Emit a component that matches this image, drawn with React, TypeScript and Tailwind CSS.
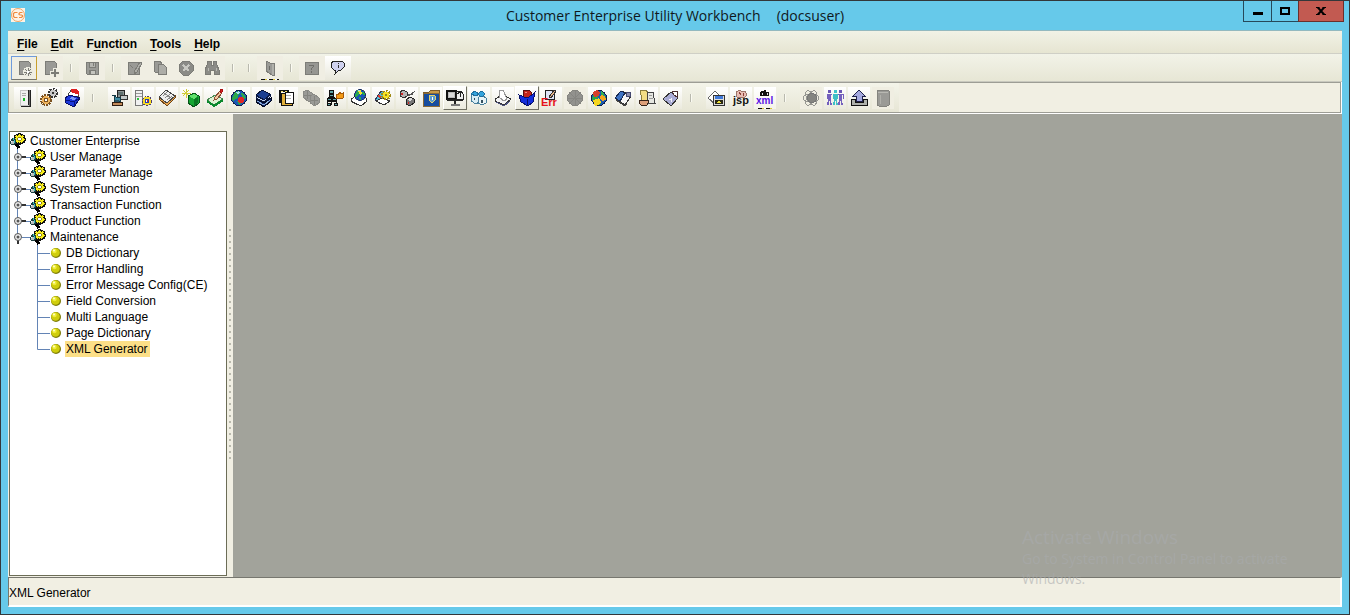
import React, { useState } from "react";

type Tool = {
  label: string;
  art?: React.ReactNode;
  look?: "flat" | "raised" | "pressed" | "off" | "smudged";
  sep?: boolean;
};

const K = "#111";

/* ---------- top toolbar drawings, 24 x 24 ---------- */
const grey = "#9a9a96";
const dark = "#7c7c77";

const pageShape = <path d="M7 5h9l2 2v11H7z" fill={grey} stroke={dark} />;

const mainTools: Tool[] = [
  {
    label: "New",
    look: "pressed",
    art: (
      <>
        {pageShape}
        <circle cx="16" cy="16" r="5" fill="#ecebe0" />
        <path d="M16 12v8M12 16h8M13 13l6 6M19 13l-6 6" stroke={dark} />
        <circle cx="16" cy="16" r="1" fill="#fff" />
      </>
    ),
  },
  {
    label: "Add",
    look: "off",
    art: (
      <>
        {pageShape}
        <path d="M17 12v9M12 17h9" stroke="#ecebe0" strokeWidth="4" />
        <path d="M17 13v8M13 17h8" stroke={dark} strokeWidth="2" />
      </>
    ),
  },
  { label: "s1", sep: true },
  {
    label: "Save",
    look: "off",
    art: (
      <>
        <path d="M6 6h12v12H7l-1-1z" fill={grey} stroke={dark} />
        <path d="M9 6h6v5H9z" fill="#b4b4af" stroke={dark} />
        <path d="M9 14h6v4H9z" fill="#c4c4be" stroke={dark} />
        <path d="M13 7v3M10 15v3" stroke={dark} />
      </>
    ),
  },
  { label: "s2", sep: true },
  {
    label: "Edit",
    look: "off",
    art: (
      <>
        <path d="M6 6h11v12H6z" fill={grey} stroke={dark} />
        <path d="M8 9l3 3M12 18l1-4 5-8 2 1-5 9z" fill="#adada8" stroke={dark} />
      </>
    ),
  },
  {
    label: "Copy",
    look: "off",
    art: (
      <>
        <path d="M6 5h6l2 3v8H7z" fill={grey} stroke={dark} />
        <path d="M10 8h5l3 3v7h-8z" fill="#adada8" stroke={dark} />
      </>
    ),
  },
  {
    label: "Cancel",
    look: "off",
    art: (
      <>
        <path d="M9 5h6l4 4v6l-4 4H9l-4-4V9z" fill="#8b8b87" stroke={dark} />
        <path d="M9 9l6 6M15 9l-6 6" stroke="#c8c8c2" strokeWidth="2" />
      </>
    ),
  },
  {
    label: "Find",
    look: "off",
    art: (
      <>
        <path d="M8 5h3v4h2V5h3l1 4 2 5v4h-5v-4h-4v4H5v-4l2-5z" fill="#8b8b87" stroke={dark} />
        <path d="M8 12v3M16 12v3" stroke="#b9b9b3" />
      </>
    ),
  },
  { label: "s3", sep: true },
  { label: "s4", sep: true },
  {
    label: "Exit",
    look: "smudged",
    art: (
      <>
        <path d="M8 5l6 3v11l-6-4z" fill={grey} stroke={dark} />
        <path d="M14 7h2v12h-2" fill="#b0b0aa" stroke={dark} />
        <path d="M11 10v4" stroke="#6b6b67" />
      </>
    ),
  },
  { label: "s5", sep: true },
  {
    label: "Help",
    look: "off",
    art: (
      <>
        <path d="M5 6h13v12H5z" fill="#969692" stroke={dark} />
        <path d="M9 10V9h4v2l-2 2v1M11 15v2" stroke="#6f6f6b" />
      </>
    ),
  },
  {
    label: "About",
    look: "raised",
    art: (
      <>
        <path
          d="M8 5h8l2 2v4l-3 3h-2l-4 4 1-4H8l-3-3V7z"
          fill="#cfd1ee"
          stroke="#222"
        />
        <path d="M12 7v1M12 9v3" stroke="#333" />
      </>
    ),
  },
];

/* ---------- lower toolbar drawings, 22 x 22 ---------- */
const globe = (x: number, y: number, size: number) => (
  <svg x={x} y={y} width={size} height={size} viewBox="0 0 16 16">
    <circle cx="8" cy="8" r="7.500" fill="#1b57b5" stroke="#0d1f4c" />
    <path d="M2 6l2-4 4-1 1 2-2 2v3l-3 1-1 3-2-3z" fill="#2aa84c" />
    <path d="M10 3l3 1 2 4-2 1-2-2z" fill="#2aa84c" />
    <path d="M6 11l3-1 1 3-2 2z" fill="#2aa84c" />
    <path d="M5 2l3-1 1 2-3 1z" fill="#a7dff0" />
  </svg>
);

const cog = (cx: number, cy: number, r: number, color: string, edge: string, hub: string) => (
  <>
    <circle cx={cx} cy={cy} r={r} stroke={edge} strokeWidth="2" strokeDasharray="2 1" />
    <circle cx={cx} cy={cy} r={r - 1} fill={color} />
    <circle cx={cx} cy={cy} r={r > 4 ? 2 : 1} fill={hub} stroke={edge} />
  </>
);

const workTools: Tool[] = [
  {
    label: "Server",
    art: (
      <>
        <path d="M13 3h4v16h-4z" fill="#6b6b6b" />
        <path d="M6 3h8v15H6z" fill="#f0f0f0" stroke="#c4c4c4" />
        <path d="M14 3v15M16 3v16H7" stroke="#222" />
        <path d="M8 6h4M8 8h4" stroke="#aaa" />
        <path d="M9 11h2v3H9z" fill="#19b929" />
      </>
    ),
  },
  {
    label: "Settings",
    art: (
      <>
        {cog(15, 6, 4, "#c9c9c9", "#333", "#fff")}
        {cog(8, 13, 5, "#f0b45c", "#7c5220", "#fff")}
      </>
    ),
  },
  {
    label: "Package",
    art: (
      <>
        <path d="M6 8l3-5 7 1 1 5-5 3z" fill="#fff" stroke="#444" />
        <path d="M9 2h5l3 3v3l-8-3z" fill="#dd2020" />
        <path d="M3 11l5-3 10 3-6 9-8-4z" fill="#1c38da" stroke="#080f65" />
        <path d="M9 10l5 1-2 2-5-1z" fill="#7e98f5" />
        <path d="M4 13l8 2 5-4M12 15v4" stroke="#071280" />
      </>
    ),
  },
  { label: "w1", sep: true },
  {
    label: "Workstation",
    art: (
      <>
        <path d="M9 3h7v8H9z" fill="#8d9494" stroke="#222" />
        <path d="M12 8h7v4h-7z" fill="#c3c8c8" stroke="#333" />
        <path d="M10 5h5v3h-5z" fill="#5f7070" />
        <path d="M4 8h3l1 2h4v4H6V9z" fill="#3f8ba2" stroke="#153a46" />
        <path d="M7 13h4v3H7z" fill="#2b5566" />
        <path d="M4 15h10v3H4z" fill="#c38b5b" stroke="#301e12" />
      </>
    ),
  },
  {
    label: "Server settings",
    art: (
      <>
        <path d="M3 3h7v15H3z" fill="#f0f0f0" stroke="#777" />
        <path d="M4 6h6M4 9h6" stroke="#999" />
        <path d="M5 11h2v2H5z" fill="#2dc33c" />
        <circle cx="15" cy="14" r="4.500" fill="#f7dc22" stroke="#4f3f6f" strokeDasharray="2 1" />
        <circle cx="15" cy="14" r="2" fill="#fff" stroke="#2740b8" />
        <path d="M15 13h1v2h-1z" fill="#d22" />
      </>
    ),
  },
  {
    label: "Ledger",
    art: (
      <>
        <path d="M3 12l8 7 8-8v-2l-8 6-8-5z" fill="#e8a650" stroke="#6e4416" />
        <path d="M3 10l7-7 9 6-8 7z" fill="#eee" stroke="#444" />
        <path d="M7 9l4-4M9 11l5-4M11 13l5-4M8 6l7 5" stroke="#888" />
      </>
    ),
  },
  {
    label: "New module",
    art: (
      <>
        <path d="M6 2v9M2 6h9M3 3l6 6M9 3L3 9" stroke="#d0cc35" />
        <path d="M8 9l6-3 5 3v7l-5 4-6-4z" fill="#16a633" stroke="#075318" />
        <path d="M9 9l5-2 4 2-4 3z" fill="#62e06c" />
        <path d="M14 12v7l4-3v-6z" fill="#0a7723" />
      </>
    ),
  },
  {
    label: "Edit notes",
    art: (
      <>
        <path d="M3 13l8-5 8 4-9 6z" fill="#dcf1d2" stroke="#4a8a55" />
        <path d="M3 14l7 5 9-6" stroke="#0a882d" strokeWidth="2" />
        <path d="M10 13l1-3 5-6 2 2-5 6z" fill="#f2c9a0" stroke="#8a4a33" />
        <path d="M16 3l2-1 1 2-2 2z" fill="#d72424" stroke="#a11" />
      </>
    ),
  },
  {
    label: "World",
    art: (
      <>
        {globe(3, 3, 16)}
        <circle cx="13" cy="13" r="3" fill="#e02828" />
      </>
    ),
  },
  {
    label: "Library",
    art: (
      <>
        <path d="M4 8l6-5 8 4-6 6z" fill="#1b3f91" stroke="#081437" />
        <path d="M4 9l8 4 6-5v2l-6 5-8-4z" fill="#c9d8ee" stroke="#0b1a45" />
        <path d="M4 12l8 4 7-5v3l-7 6-8-5z" fill="#10286b" stroke="#050b22" />
        <path d="M5 14l7 4 6-5" stroke="#8fb0dc" />
      </>
    ),
  },
  {
    label: "Documents",
    art: (
      <>
        <path d="M3 3h10v2H5v11H3z" fill="#111" />
        <path d="M5 6h11v12H5z" fill="#e2b03b" stroke="#111" />
        <path d="M9 5h8v11H9z" fill="#fff" stroke="#111" />
        <path d="M10 8h5M10 11h5" stroke="#aaa" />
        <path d="M5 4h2M9 4h2" stroke="#f5e26a" />
      </>
    ),
  },
  {
    label: "Components",
    look: "off",
    art: (
      <>
        <path d="M3 5l4-2 5 3v6l-3 3-6-5z" fill={grey} stroke="#8a8a85" />
        <path d="M10 9l4-2 5 4v5l-4 3-5-3z" fill={grey} stroke="#8a8a85" />
        <path d="M7 4v8M4 8h7M14 9v9M11 13h7" stroke="#84847f" />
      </>
    ),
  },
  {
    label: "Hierarchy",
    art: (
      <>
        <path d="M7 4v14M4 10h7M3 14h9M3 14v4M12 14v4" stroke="#111" />
        <path d="M5 3h4v3H5zM5 7h4v2H5zM3 11h4v2H3zM8 11h4v2H8zM3 16h3v2H3zM10 16h3v2h-3z" fill="#5fa3a6" stroke="#111" />
        <path d="M12 7l2 1 2-3 1 2 2-1v5l-3 1-4-1z" fill="#f39a14" stroke="#a5590a" />
      </>
    ),
  },
  {
    label: "Publish",
    art: (
      <>
        <path d="M3 12l5-3 10 2 1 3-6 5-10-5z" fill="#fff" stroke="#333" />
        <path d="M4 15l9 4 6-5" stroke="#333" />
        {globe(6, 2, 12)}
        <path d="M10 4l3-1 1 3-2 2z" fill="#eee236" />
      </>
    ),
  },
  {
    label: "Configure page",
    art: (
      <>
        <path d="M3 13l6-9 5 2-5 11z" fill="#55bfd8" stroke="#335" />
        <path d="M4 14l6-3 8 3-6 4z" fill="#fff" stroke="#333" />
        {cog(14, 8, 4, "#f7e321", "#a08b16", "#fff")}
        <path d="M6 9l3 1" stroke="#dd3c31" strokeWidth="2" />
      </>
    ),
  },
  {
    label: "Network",
    art: (
      <>
        <path d="M9 7l4 2 6-5M12 7h5" stroke="#555" />
        <path d="M4 5l3-2 4 2v4l-3 2-4-2z" fill="#b5b5b5" stroke="#333" />
        <path d="M10 13l4-3 4 2v4l-4 3-4-2z" fill="#777" stroke="#222" />
        <path d="M11 13l3-2 3 1-3 2z" fill="#ddd" />
        <path d="M5 7h2M12 16h1" stroke="#cf2424" strokeWidth="2" />
      </>
    ),
  },
  {
    label: "Scheduled folder",
    art: (
      <>
        <path d="M3 5h6l2-2h8v3H3z" fill="#c99a4a" stroke="#7a5a2b" />
        <path d="M3 6h16v13H3z" fill="#174d9f" stroke="#8a6a37" />
        <path d="M9 9l3-1 3 1v4l-3 3-3-3z" fill="#5a9bd0" stroke="#e6d26b" />
        <path d="M12 10v2h1" stroke="#fff" />
      </>
    ),
  },
  {
    label: "Terminal",
    look: "raised",
    art: (
      <>
        <path d="M3 4h9v8H3z" fill="#bbb" stroke="#111" strokeWidth="2" />
        <path d="M5 6h5v4H5z" fill="#d9d9d9" />
        <path d="M12 4h5l2 3v5h-7z" fill="#eee" stroke="#222" />
        <path d="M13 7l3-2v5" stroke="#222" />
        <path d="M3 13h16M11 13v5" stroke="#222" strokeWidth="2" />
        <path d="M7 18h9" stroke="#777" strokeWidth="2" />
      </>
    ),
  },
  {
    label: "User groups",
    art: (
      <>
        <path d="M3 8l4-3 4 3v7l-3 2-5-3z" fill="#d9edf5" stroke="#477f9c" />
        <path d="M10 11l4-3 4 3v5l-4 2-4-2z" fill="#e9f4f7" stroke="#477f9c" />
        <path d="M3 7l4-3 4 3-3 2zM9 7l5-3 3 3-3 3z" fill="#35a4dd" stroke="#1f6f9e" />
        <path d="M13 13h2v3h-2zM6 11h1v2H6z" fill="#334f60" />
      </>
    ),
  },
  {
    label: "Scan",
    art: (
      <>
        <path d="M3 12l7-4 9 4-7 6-9-4z" fill="#f4f4f4" stroke="#333" />
        <path d="M7 4l4-1 4 9-3 2-4-3z" fill="#fff" stroke="#999" />
        <path d="M4 15l8 4 6-5" stroke="#4b5180" />
      </>
    ),
  },
  {
    label: "Deploy",
    look: "raised",
    art: (
      <>
        <path d="M8 3h5l2 2v4l-2 1H8L7 8V5z" fill="#c3241c" stroke="#5b1010" />
        <path d="M9 5h2v1H9z" fill="#f08a80" />
        <path d="M3 8l8 3 5-3 3-3-2 10-5 4-7-4z" fill="#142edc" stroke="#06106c" />
        <path d="M11 12v6" stroke="#06106c" />
      </>
    ),
  },
  {
    label: "Error editor",
    art: (
      <>
        <path d="M5 3h9v9H5z" fill="#dde3f5" stroke="#222" />
        <path d="M9 10l5-7 2 1-5 7z" fill="#e7b486" stroke="#333" />
        <text x="1" y="19" fill="#e5131b" fontFamily="Liberation Sans, sans-serif" fontWeight="700" fontSize="11">
          Err
        </text>
      </>
    ),
  },
  {
    label: "Stop",
    look: "off",
    art: (
      <>
        <circle cx="11" cy="11" r="7.500" fill="#92928e" stroke="#858580" />
        <path d="M6 6l10 10M16 6L6 16M4 11h14M11 4v14" stroke="#868682" />
      </>
    ),
  },
  {
    label: "Regions",
    art: (
      <>
        {globe(3, 3, 16)}
        <path d="M5 5l4-2 3 2-1 4-5 1z" fill="#d7412d" />
        <path d="M13 8l4 1 1 4-4 1-2-3z" fill="#f3a51e" />
        <path d="M5 13l6-2 2 4-2 3-4 1z" fill="#f5d522" />
        <path d="M13 4l3 2-2 2z" fill="#36b358" />
      </>
    ),
  },
  {
    label: "Notebook",
    art: (
      <>
        <path d="M3 11l7-7 9 5-6 9z" fill="#f6f6f6" stroke="#333" />
        <path d="M3 11l6-7 4 2-5 8z" fill="#3f74c4" stroke="#162952" />
        <path d="M14 5h4v4h-4z" fill="#8b8fae" stroke="#444870" />
        <path d="M4 13l9 6 2-3" stroke="#444" />
      </>
    ),
  },
  {
    label: "Hand over",
    art: (
      <>
        <path d="M4 3h6l2 3v7H6z" fill="#f2dd84" stroke="#8a7d3c" />
        <path d="M11 5h6l2 11h-7z" fill="#e6e7e1" stroke="#444" />
        <path d="M13 8h3M13 11h4" stroke="#999" />
        <path d="M3 13h6l4 1-2 4H5l-2-2z" fill="#dd9f78" stroke="#372318" />
      </>
    ),
  },
  {
    label: "Tag",
    art: (
      <>
        <path d="M3 12l8-7 7 6-7 8z" fill="#a9abd4" stroke="#333" />
        <path d="M12 4h5v6l-3-2z" fill="#fff" stroke="#4b2d2d" />
        <path d="M9 12h3M11 11v4" stroke="#f2f2fa" />
      </>
    ),
  },
  { label: "w2", sep: true },
  {
    label: "Preview",
    art: (
      <>
        <path d="M2 11l7-7 6 6-6 7z" fill="#fff" stroke="#666" />
        <path d="M7 8h11v10H7z" fill="#ddd" stroke="#333" />
        <path d="M9 9h8v3H9z" fill="#3f78d8" />
        <path d="M9 13h8v4H9z" fill="#292714" />
        <path d="M11 15h4M12 14h2" stroke="#efe33a" />
      </>
    ),
  },
  {
    label: "JSP",
    art: (
      <>
        <path d="M6 5l4-2 2 2 3-1 2 4-2 2H7z" fill="#e9bdb3" stroke="#9c7468" />
        <path d="M9 5l2 3M13 6v3" stroke="#8a3f35" />
        <text x="3" y="17" fill={K} fontFamily="Liberation Sans, sans-serif" fontWeight="700" fontSize="11">
          jsp
        </text>
      </>
    ),
  },
  {
    label: "XML",
    look: "smudged",
    art: (
      <>
        <path d="M6 5l2-1h2V3h2v2h3v4H6z" fill="#111" />
        <path d="M8 6v2M13 6v2" stroke="#ddd" />
        <text x="2" y="17" fill="#5a12e6" fontFamily="Liberation Sans, sans-serif" fontWeight="700" fontSize="10">
          xml
        </text>
      </>
    ),
  },
  { label: "w3", sep: true },
  {
    label: "Process",
    look: "off",
    art: (
      <>
        <ellipse cx="11" cy="11" rx="8" ry="4" stroke="#979792" />
        <ellipse cx="11" cy="11" rx="8" ry="4" stroke="#979792" transform="rotate(60 11 11)" />
        <ellipse cx="11" cy="11" rx="8" ry="4" stroke="#979792" transform="rotate(120 11 11)" />
        <circle cx="12" cy="11" r="4.500" fill="#858581" stroke="#777" />
      </>
    ),
  },
  {
    label: "Users",
    art: (
      <>
        <path d="M4 3h3v3H4zM15 3h3v3h-3z" fill="#6a56b5" />
        <path d="M10 3h3v3h-3z" fill="#3fc6c9" />
        <path d="M3 7h5M14 7h5M3 7v5M19 7v5" stroke="#7460bd" />
        <path d="M4 7h3v6l1 5H6v-4H5v4H3l1-5zM15 7h3v6l1 5h-2v-4h-1v4h-2l1-5z" fill="#7460bd" />
        <path d="M9 7h5v5h-1v1l1 5h-2v-4h-1v4H9l1-5v-1H9z" fill="#3fbfc6" />
      </>
    ),
  },
  {
    label: "Upload",
    art: (
      <>
        <path d="M3 12h4v3h8v-3h4v6H3z" fill="#aeb0ac" stroke="#111" />
        <path d="M11 3l6 6h-3v5H8V9H5z" fill="#a5a9df" stroke="#20224c" />
      </>
    ),
  },
  {
    label: "Recycle bin",
    look: "off",
    art: (
      <>
        <path d="M5 4l2-1h8l2 1v14l-2 1H7l-2-1z" fill="#9a9a96" stroke="#83837e" />
        <path d="M6 5h10" stroke="#b8b8b2" />
        <path d="M8 8v9" stroke="#b0b0aa" />
      </>
    ),
  },
];

function Smudge() {
  return (
    <span className="absolute inset-x-1 bottom-0 h-px bg-[repeating-linear-gradient(90deg,#111_0_4px,#d9c53a_4px_6px,#fff_6px_8px)]" />
  );
}

const bigLooks = {
  flat: "bg-[#f1efe3]",
  off: "bg-[#f0eee3]",
  raised: "bg-gradient-to-b from-white to-[#e9e8dc]",
  pressed:
    "border border-t-[#6f9bdc] border-l-[#6f9bdc] border-b-[#77776f] border-r-[#c9a02e] bg-[#f0eee3]",
  smudged: "bg-[#f0eee3]",
};

const smallLooks = {
  flat: "mx-px my-1 size-[22px] bg-gradient-to-b from-white to-[#ebeade]",
  off: "mx-px my-1 size-[22px] bg-[#f0eee2]",
  raised:
    "my-[3px] size-6 border border-t-white border-l-white border-b-[#6f6f62] border-r-[#6f6f62] bg-gradient-to-b from-white to-[#ebeade]",
  pressed: "mx-px my-1 size-[22px] bg-white",
  smudged: "mx-px my-1 size-[22px] bg-gradient-to-b from-white to-[#f4f3ea]",
};

function Bar() {
  return <span className="h-2 w-0.5 border-l border-[#b9b9ae] bg-[#fafaf2]" />;
}

function MainToolbar() {
  return (
    <div role="toolbar" aria-label="Main" className="flex h-7 items-center border-b border-[#c9c9bf] bg-gradient-to-b from-[#f2f3e8] to-[#e7e6d5] pl-[3px]">
      {mainTools.map((t) =>
        t.sep ? (
          <span key={t.label} className="flex w-4 justify-center">
            <Bar />
          </span>
        ) : (
          <button
            key={t.label}
            type="button"
            aria-label={t.label}
            className={`relative flex h-6 w-[26px] items-center justify-center ${bigLooks[t.look ?? "flat"]}`}
          >
            <svg viewBox="0 0 24 24" className="size-6 shrink-0" fill="none" shapeRendering="crispEdges">
              {t.art}
            </svg>
            {t.look === "smudged" && <Smudge />}
          </button>
        ),
      )}
    </div>
  );
}

function WorkToolbar() {
  return (
    <div className="border-b border-white bg-white pr-px">
      <div className="flex h-[31px] border border-[#9d9d95] bg-[#f1efe3]">
        <div role="toolbar" aria-label="Workbench" className="flex bg-gradient-to-b from-[#f4f4ea] to-[#e7e6d5] px-1">
          {workTools.map((t) =>
            t.sep ? (
              <span key={t.label} className="flex w-[22px] items-center pl-[7px]">
                <Bar />
              </span>
            ) : (
              <button
                key={t.label}
                type="button"
                aria-label={t.label}
                className={`relative flex shrink-0 items-center justify-center ${smallLooks[t.look ?? "flat"]}`}
              >
                <svg viewBox="0 0 22 22" className="size-[22px] shrink-0" fill="none" shapeRendering="crispEdges">
                  {t.art}
                </svg>
                {t.look === "smudged" && <Smudge />}
              </button>
            ),
          )}
        </div>
      </div>
    </div>
  );
}

function GearIcon() {
  return (
    <svg viewBox="0 0 16 16" className="size-4 shrink-0 overflow-visible" fill="none" shapeRendering="crispEdges">
      <path d="M5 10l4 5" stroke="#000" strokeWidth="3" />
      <path
        d="M8 0h3v1h2v1h2v3h1v3h-1v2h-2v1h-2v1H8v-1H6v-1H4V8H3V5h1V2h2V1h2z"
        fill="#111"
      />
      <path
        d="M9 1h1v1h1v1h1V2h1v1h1v1h-1v1h1v1h1v1h-1v1h-1v1h-1v1h-1v-1h-1v1H9v-1H8v1H7V9H6V8H5V7h1V6H5V5h1V4H5V3h1V2h1v1h1V2h1z"
        fill="#f8ee1c"
      />
      <path d="M8 4h3v1h1v2h-1v1H8V7H7V5h1z" fill="#8e8a1a" />
      <path d="M8 5h3v2H8z" fill="#fff" />
      <path d="M2 5h3v1h1v5H5v1H1v-1H0V8h1V6h1z" fill="#1b3d3e" />
      <path d="M3 5h1v2H3zM4 7h1v3H4z" fill="#37c0c0" />
      <path d="M1 8h3v3H1z" fill="#b9c0c0" />
      <path d="M1 8h1v1H1z" fill="#fff" />
    </svg>
  );
}

function Handle({ open }: { open: boolean }) {
  return (
    <svg viewBox="0 0 20 16" className="h-4 w-5 shrink-0" fill="none">
      <path d={open ? "M7.500 0v8" : "M7.500 0v16"} stroke="#6384b5" />
      <path d="M12 8.500h8" stroke="#6384b5" />
      <path d={open ? "M8 11v4" : "M11 8h5"} stroke="#333" strokeWidth="2" />
      <circle cx="8" cy="8" r="3.500" fill="#eee" stroke="#555" />
      <circle cx="8" cy="8" r="1.500" fill="#555" />
    </svg>
  );
}

function Branch({ last }: { last: boolean }) {
  return (
    <svg viewBox="0 0 40 16" className="h-4 w-10 shrink-0" fill="none">
      <path d={last ? "M27.500 0v8.500H40" : "M27.500 0v16M27.500 8.500H40"} stroke="#6384b5" />
    </svg>
  );
}

function Ball() {
  return (
    <svg viewBox="0 0 12 12" className="size-3 shrink-0">
      <circle cx="6" cy="6" r="5" fill="#7d7c08" />
      <circle cx="5.500" cy="5.500" r="4.300" fill="#cfcd0c" />
      <circle cx="4.500" cy="4" r="2.200" fill="#f0ed3a" />
      <circle cx="4" cy="3.500" r="1" fill="#fdfdd0" />
    </svg>
  );
}

const groups = [
  "User Manage",
  "Parameter Manage",
  "System Function",
  "Transaction Function",
  "Product Function",
  "Maintenance",
];

const maintenance = [
  "DB Dictionary",
  "Error Handling",
  "Error Message Config(CE)",
  "Field Conversion",
  "Multi Language",
  "Page Dictionary",
  "XML Generator",
];

const menus = [
  ["", "F", "ile"],
  ["", "E", "dit"],
  ["F", "u", "nction"],
  ["", "T", "ools"],
  ["", "H", "elp"],
];

export default function App() {
  const [selected, setSelected] = useState("XML Generator");

  return (
    <div className="flex h-screen flex-col border border-[#33373a] bg-[#66c9ea] font-['Liberation_Sans',Arial,sans-serif] text-xs text-black">
      <header className="flex h-[29px] shrink-0 items-start">
        <div className="flex flex-1 pt-1.5 pl-[9px]">
          <svg viewBox="0 0 16 16" className="size-4">
            <path d="M1 1h14v14H1z" fill="#fdf3e6" />
            <circle cx="8" cy="8" r="6.500" fill="none" stroke="#f0a566" />
            <path d="M7.500 5.500H4.500l-1 1v3l1 1h3M12.500 5.500H10l-1 1v1l1 .5h1.500l1 .5v1l-1 1H9" fill="none" stroke="#ee8b3f" strokeWidth="1.200" />
          </svg>
        </div>
        <h1 className="flex gap-4 pt-[5px] font-['Open_Sans','Noto_Sans',sans-serif] text-sm leading-5 text-[#10181c]">
          <span>Customer Enterprise Utility Workbench</span>
          <span>(docsuser)</span>
        </h1>
        <div className="flex flex-1 justify-end pr-[5px] pl-1">
          <button type="button" aria-label="Minimize" className="flex h-[21px] w-[29px] items-center justify-center border-x border-b border-[#26495a]">
            <span className="mt-1 h-[3px] w-2.5 bg-black" />
          </button>
          <button type="button" aria-label="Maximize" className="flex h-[21px] w-[26px] items-center justify-center border-b border-[#26495a]">
            <span className="h-2 w-2.5 border-2 border-black" />
          </button>
          <button type="button" aria-label="Close" className="flex h-[21px] w-[46px] items-center justify-center border-x border-b border-[#6b2f2c] bg-[#c25a51]">
            <svg viewBox="0 0 10 8" className="h-2 w-2.5">
              <path d="M1.500 0l7 8M8.500 0l-7 8" stroke="#000" strokeWidth="2" />
              <path d="M0 .5h3.500M6.500 .5H10M0 7.500h3.500M6.500 7.500H10" stroke="#000" />
            </svg>
          </button>
        </div>
      </header>

      <div className="mx-[7px] mb-[7px] flex min-h-0 flex-1 flex-col border-t border-[#93b9bf] bg-[#f1efe3]">
        <nav className="flex h-[23px] shrink-0 items-center gap-[13px] border-b border-[#cfcfc6] bg-gradient-to-b from-[#f1f2e6] to-[#e6e5d2] pt-1 pl-[9px]">
          {menus.map((m) => (
            <button key={m.join("")} type="button" className="font-bold">
              {m[0]}
              <u className="underline-offset-2">{m[1]}</u>
              {m[2]}
            </button>
          ))}
        </nav>
        <MainToolbar />
        <WorkToolbar />

        <div className="flex min-h-0 flex-1">
          <aside className="flex w-[225px] shrink-0 border-b border-[#f1efe3]">
            <div className="mt-[17px] ml-px w-[218px] border border-[#6c6d57] bg-white">
              <ul role="tree" aria-label="Functions" className="pt-px">
                <li role="treeitem" className="flex h-4 items-center gap-1">
                  <GearIcon />
                  <span>Customer Enterprise</span>
                </li>
                {groups.map((g) => (
                  <li key={g} role="treeitem" className="flex h-4 items-center">
                    <Handle open={g === "Maintenance"} />
                    <GearIcon />
                    <span className="pl-1">{g}</span>
                  </li>
                ))}
                {maintenance.map((name, i) => (
                  <li key={name} role="treeitem" className="flex h-4 items-center">
                    <Branch last={i === maintenance.length - 1} />
                    <Ball />
                    <button
                      type="button"
                      onClick={() => setSelected(name)}
                      className={`ml-[3px] h-4 pr-0.5 pl-px leading-4 ${selected === name ? "bg-[#fcdf87]" : ""}`}
                    >
                      {name}
                    </button>
                  </li>
                ))}
              </ul>
            </div>
            <div className="flex flex-1 items-center pl-0.5">
              <span className="h-[232px] w-0.5 bg-[repeating-linear-gradient(180deg,#b9b9ad_0_2px,transparent_2px_6px)]" />
            </div>
          </aside>
          <main className="relative flex-1 bg-[#a2a39b]">
            <div className="absolute right-12 -bottom-3 z-10 w-[272px] font-['Open_Sans','Noto_Sans',sans-serif] text-sm leading-5 text-[#a9abad]/60">
              <p className="text-[19px] leading-6">Activate Windows</p>
              <p>Go to System in Control Panel to activate Windows.</p>
            </div>
          </main>
        </div>

        <footer className="flex h-[30px] shrink-0 items-center border-t border-r-2 border-b-2 border-l border-t-[#77776f] border-r-white border-b-white border-l-[#77776f] pt-0.5">
          {selected}
        </footer>
      </div>
    </div>
  );
}
